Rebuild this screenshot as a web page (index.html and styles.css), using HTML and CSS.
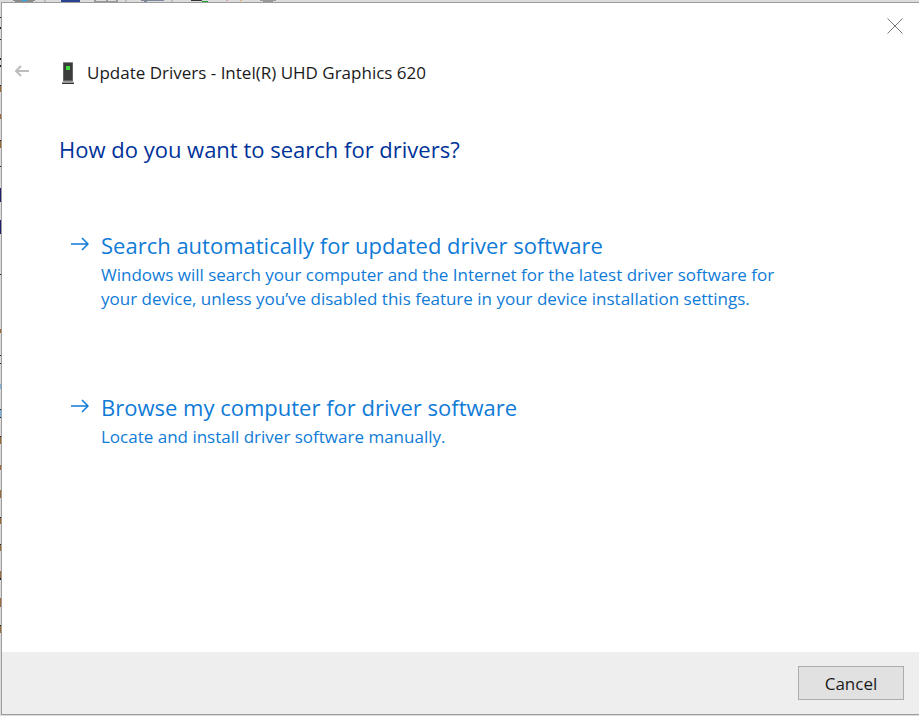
FILE: index.html
```html
<!DOCTYPE html>
<html lang="en">
<head>
    <meta charset="UTF-8">
    <meta name="viewport" content="width=device-width, initial-scale=1.0">
    <title>Update Drivers</title>
    <link rel="stylesheet" href="styles.css">
</head>
<body>
    <!-- Edge of the window behind the dialog -->
    <svg class="behind-top" width="300" height="2" aria-hidden="true">
        <path d="M13 0h22v1h-2v1H15V1h-2z" fill="#8a8a8a"/>
        <path d="M22 0h5v1h-5z" fill="#2aa7f0"/>
        <path d="M45 0v2M126 0v2M172 0v2" stroke="#a0a0a0"/>
        <path d="M61 0h19v2H61z" fill="#2b4290"/>
        <path d="M94 0h24v2H94z" fill="#999"/>
        <path d="M96 0h10v1H96zM108 0h8v1h-8z" fill="#ddd"/>
        <path d="M141 0h23v1h-17v1h-3V1h-3z" fill="#7c8a9b"/>
        <path d="M191 0h11v1h-11z" fill="#333"/>
        <path d="M202 1h6v1h-6z" fill="#18a02c"/>
        <path d="M226 0h2v1h-2z" fill="#d9a0b0"/>
        <path d="M240 0h2v1h-2z" fill="#e0b070"/>
        <path d="M260 0h16v1h-3v1h-10V1h-3z" fill="#999"/>
    </svg>
    <svg class="behind-left" width="1" height="716" aria-hidden="true">
        <path d="M0 17h1v1H0zM0 27h1v2H0zM0 39h1v1H0zM0 58h1v2H0zM0 65h1v2H0zM0 85h1v1H0zM0 140h1v1H0zM0 166h1v1H0zM0 274h1v1H0zM0 355h1v1H0zM0 363h1v1H0zM0 409h1v1H0zM0 417h1v1H0zM0 436h1v1H0zM0 517h1v1H0zM0 544h1v1H0zM0 578h1v2H0zM0 625h1v1H0z" fill="#222"/>
        <path d="M0 86h1v6H0zM0 114h1v5H0zM0 141h1v7H0zM0 329h1v4H0zM0 437h1v7H0zM0 465h1v5H0zM0 490h1v8H0zM0 518h1v6H0zM0 545h1v6H0zM0 571h1v7H0zM0 598h1v9H0zM0 626h1v7H0z" fill="#9a6a38"/>
        <path d="M0 188h1v14H0zM0 220h1v14H0z" fill="#22206a"/>
        <path d="M0 384h1v5H0zM0 410h1v7H0z" fill="#7db4e0"/>
    </svg>

    <div class="dialog">
        <button class="close-button" aria-label="Close">
            <svg width="16" height="16" viewBox="0 0 16 16">
                <path d="M0.5 0.5l15 15M15.5 0.5l-15 15" fill="none" stroke="#777"/>
            </svg>
        </button>

        <div class="title-bar">
            <button class="back-button" aria-label="Back" disabled>
                <svg width="14" height="12" viewBox="0 0 14 12">
                    <path d="M14 6H1M6 1L1 6l5 5" fill="none" stroke="#bdbdbd" stroke-width="2"/>
                </svg>
            </button>
            <svg class="device-icon" width="12" height="22" viewBox="0 0 12 22">
                <path d="M0 20.500h12V22H0z" fill="#333"/>
                <path d="M1 0h10v19H1z" fill="#8a8a8a"/>
                <path d="M1.500 1h9v17.500h-9z" fill="#3c3c3c"/>
                <path d="M1 19h10v1.500H1z" fill="#999"/>
                <path d="M4 4h4v4H4z" fill="#3ddc3d"/>
            </svg>
            <span class="title">Update Drivers - Intel(R) UHD Graphics 620</span>
        </div>

        <div class="content">
            <h1>How do you want to search for drivers?</h1>

            <button class="option">
                <svg class="arrow" width="18" height="14" viewBox="0 0 18 14">
                    <path d="M0 7h17M11 1l6 6-6 6" fill="none" stroke="#0f7bd7" stroke-width="1.500"/>
                </svg>
                <span class="option-text">
                    <span class="option-title">Search automatically for updated driver software</span>
                    <span class="option-note">Windows will search your computer and the Internet for the latest driver software for<br>your device, unless you’ve disabled this feature in your device installation settings.</span>
                </span>
            </button>

            <button class="option">
                <svg class="arrow" width="18" height="14" viewBox="0 0 18 14">
                    <path d="M0 7h17M11 1l6 6-6 6" fill="none" stroke="#0f7bd7" stroke-width="1.500"/>
                </svg>
                <span class="option-text">
                    <span class="option-title">Browse my computer for driver software</span>
                    <span class="option-note">Locate and install driver software manually.</span>
                </span>
            </button>
        </div>

        <div class="footer">
            <button class="cancel-button">Cancel</button>
        </div>
    </div>
</body>
</html>
```
FILE: styles.css
```css
* {
    box-sizing: border-box;
}

body {
    margin: 0;
    padding: 2px 0 1px 1px;
    height: 100vh;
    overflow: hidden;
    background-color: #dcdcdc;
    font-family: "Open Sans", "Noto Sans", sans-serif;
    color: #1a1a1a;
}

button {
    font-family: inherit;
    color: inherit;
    background: none;
    border: none;
    padding: 0;
    text-align: left;
}

svg {
    display: block;
    flex: none;
}

.behind-top, .behind-left {
    position: absolute;
    top: 0;
    left: 0;
}

.dialog {
    position: relative;
    display: flex;
    flex-direction: column;
    height: 100%;
    background-color: white;
    border: 1px solid #9c9c9c;
    border-right: none;
}

.close-button {
    position: absolute;
    top: 15px;
    right: 16px;
}

.title-bar {
    display: flex;
    align-items: center;
    padding: 58px 13px 0;
    font-size: 17px;
    line-height: 24px;
}

.back-button {
    margin-bottom: 4px;
}

.device-icon {
    margin: 0 13px 0 33px;
}

.content {
    flex: 1;
    padding: 48px 57px 0;
}

h1 {
    margin: 0 0 64px;
    font-size: 22px;
    font-weight: 400;
    line-height: 32px;
    color: #003399;
}

.option {
    display: flex;
    gap: 12px;
    margin: 0 0 80px;
    padding: 0 12px;
    color: #0f7bd7;
}

.arrow {
    margin-top: 8px;
}

.option-title, .option-note {
    display: block;
}

.option-title {
    margin-bottom: 2px;
    font-size: 22px;
    line-height: 32px;
}

.option-note {
    font-size: 17px;
    line-height: 24px;
}

.footer {
    display: flex;
    justify-content: flex-end;
    padding: 14px 15px;
    background-color: #eee;
}

.cancel-button {
    width: 106px;
    height: 34px;
    background-color: #e1e1e1;
    border: 1px solid #adadad;
    font-size: 17px;
    text-align: center;
}
```
